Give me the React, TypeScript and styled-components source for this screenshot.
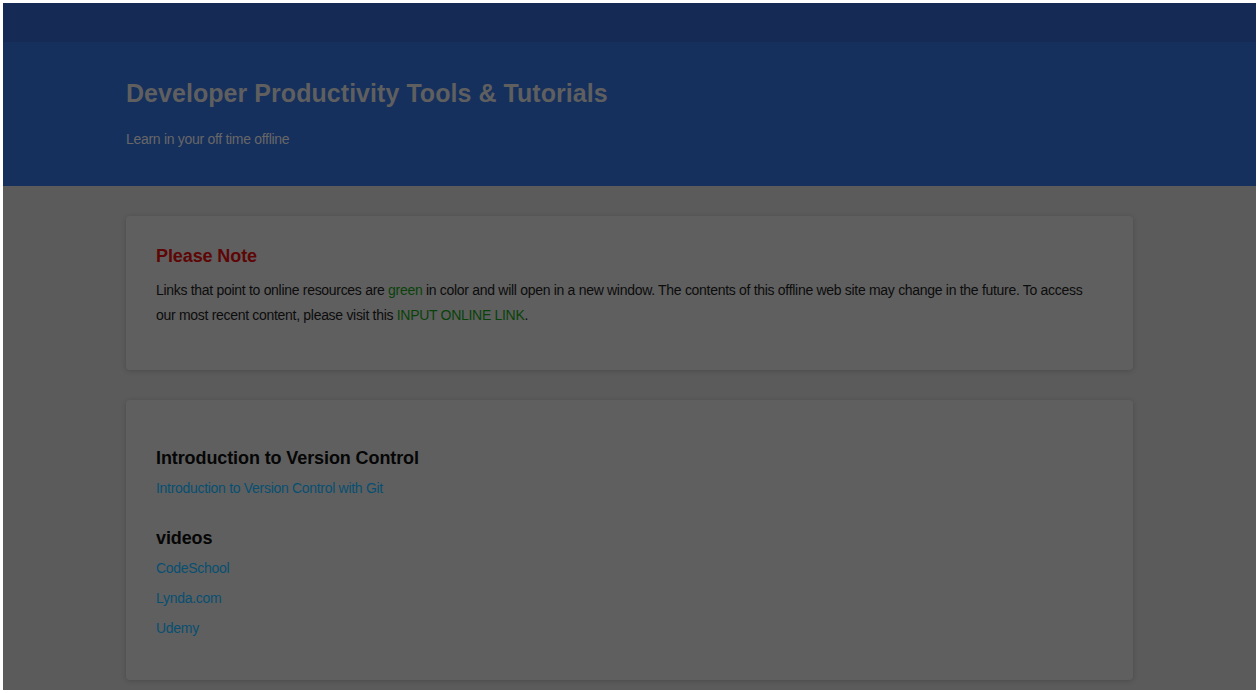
import React from "react";
import styled, { createGlobalStyle } from "styled-components";

const GlobalStyle = createGlobalStyle`
  html, body {
    margin: 0;
    padding: 0;
    background: #ffffff;
  }
  body {
    padding: 3px;
    font-family: "Liberation Sans", Arial, Helvetica, sans-serif;
  }
`;

const Frame = styled.div`
  height: calc(100vh - 6px);
  overflow: hidden;
  background: #5b5b5b;
  display: flex;
  flex-direction: column;
`;

const TopBar = styled.div`
  height: 39px;
  flex-shrink: 0;
  background: #152a54;
`;

const Hero = styled.header`
  height: 144px;
  flex-shrink: 0;
  background: #16305e;
`;

const Container = styled.div`
  width: 1007px;
  margin: 0 auto;
`;

const HeroInner = styled(Container)`
  padding-top: 36px;
`;

const Title = styled.h1`
  margin: 0;
  font-size: 25px;
  line-height: 30px;
  font-weight: 700;
  letter-spacing: 0.05px;
  color: #5f5f5f;
`;

const Subtitle = styled.p`
  margin: 22px 0 0;
  font-size: 14px;
  line-height: 18px;
  letter-spacing: -0.3px;
  color: #676767;
`;

const Main = styled(Container)`
  display: flex;
  flex-direction: column;
  gap: 30px;
  padding-top: 30px;
`;

const Card = styled.section<{ $top: number; $bottom: number }>`
  background: #5f5f5f;
  border-radius: 4px;
  box-shadow: 0 1px 5px rgba(0, 0, 0, 0.18);
  padding: ${(p) => p.$top}px 30px ${(p) => p.$bottom}px;
`;

const Heading = styled.h3<{ $tone?: "red" | "dark" }>`
  margin: 0;
  font-size: 18px;
  line-height: 20px;
  font-weight: 700;
  letter-spacing: -0.1px;
  color: ${(p) => (p.$tone === "red" ? "#5e0606" : "#060606")};
`;

const Text = styled.p`
  margin: 12px 0 0;
  font-size: 14px;
  line-height: 25px;
  letter-spacing: -0.3px;
  color: #0c0c0c;
`;

const Online = styled.a`
  color: #094209;
  text-decoration: none;
`;

const LinkList = styled.div<{ $after?: number }>`
  display: flex;
  flex-direction: column;
  gap: 14px;
  margin: 12px 0 ${(p) => p.$after ?? 0}px;
`;

const Link = styled.a`
  font-size: 14px;
  line-height: 16px;
  letter-spacing: -0.3px;
  color: #064f72;
  text-decoration: none;
`;

export default function App() {
  return (
    <>
      <GlobalStyle />
      <Frame>
        <TopBar />
        <Hero>
          <HeroInner>
            <Title>Developer Productivity Tools &amp; Tutorials</Title>
            <Subtitle>Learn in your off time offline</Subtitle>
          </HeroInner>
        </Hero>
        <Main>
          <Card $top={30} $bottom={42}>
            <Heading $tone="red">Please Note</Heading>
            <Text>
              Links that point to online resources are <Online href="#">green</Online> in
              color and will open in a new window. The contents of this offline web site may
              change in the future. To access our most recent content, please visit this{" "}
              <Online href="#">INPUT ONLINE LINK</Online>.
            </Text>
          </Card>
          <Card $top={48} $bottom={44}>
            <Heading>Introduction to Version Control</Heading>
            <LinkList $after={32}>
              <Link href="#">Introduction to Version Control with Git</Link>
            </LinkList>
            <Heading>videos</Heading>
            <LinkList>
              <Link href="#">CodeSchool</Link>
              <Link href="#">Lynda.com</Link>
              <Link href="#">Udemy</Link>
            </LinkList>
          </Card>
        </Main>
      </Frame>
    </>
  );
}
